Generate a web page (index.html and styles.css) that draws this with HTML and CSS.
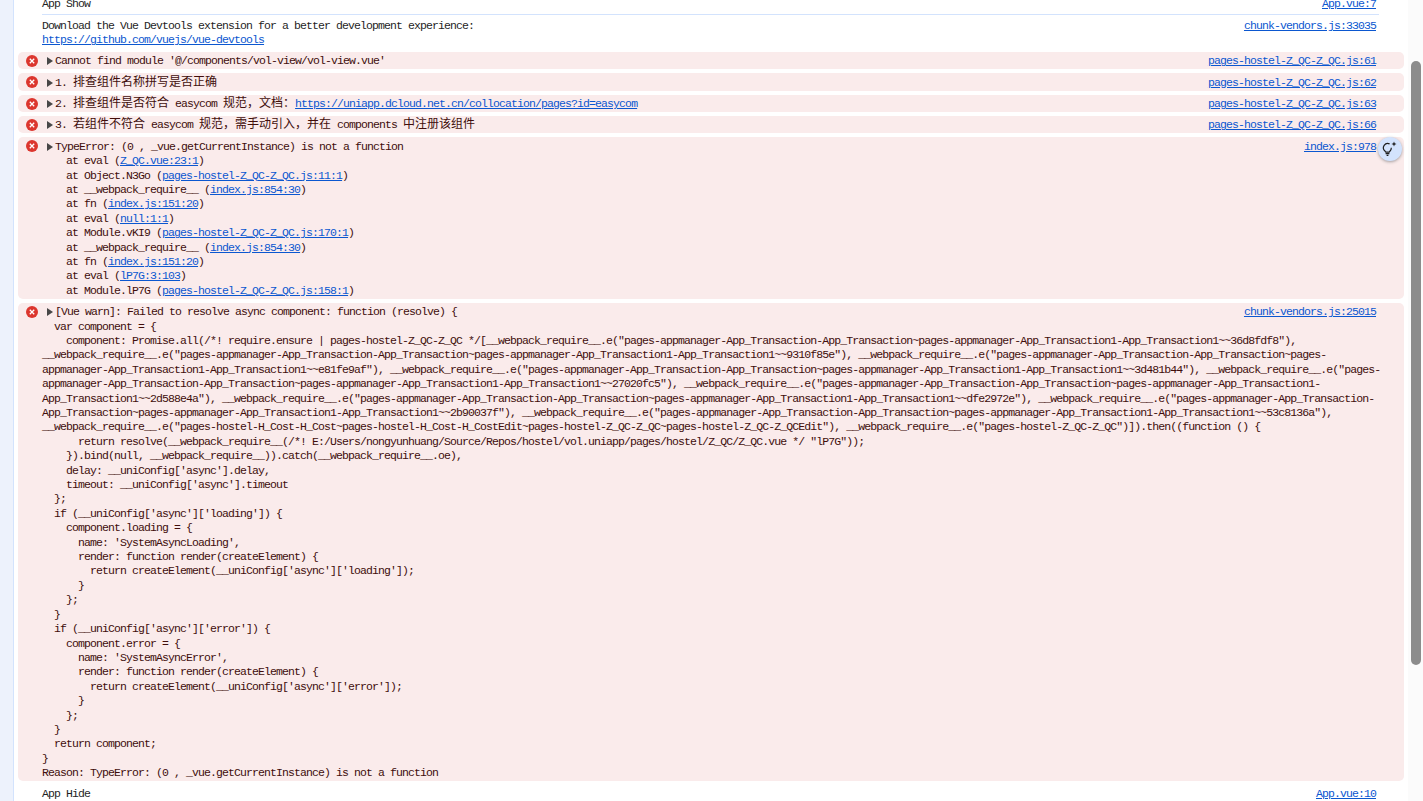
FILE: index.html
```html
<!DOCTYPE html>
<html lang="en">
<head>
<meta charset="utf-8">
<title>Console</title>
<link rel="stylesheet" href="styles.css">
</head>
<body>
<div class="rail"></div>
<main class="console">
  <div class="row row-first"><div class="ruled"><a class="src" href="#">App.vue:7</a><div class="line">App Show</div></div></div>
  <div class="row row-info"><div class="msg"><a class="src" href="#">chunk-vendors.js:33035</a><div class="line">Download the Vue Devtools extension for a better development experience:</div><div class="line"><a href="#">https://github.com/vuejs/vue-devtools</a></div></div></div>

  <div class="row err"><svg class="icon" viewBox="0 0 12 12"><circle cx="6" cy="6" r="6"/><path d="M3.8 3.8l4.4 4.4M8.2 3.8l-4.4 4.4"/></svg><div class="msg"><a class="src" href="#">pages-hostel-Z_QC-Z_QC.js:61</a><div class="line"><span class="arrow"></span>Cannot find module '@/components/vol-view/vol-view.vue'</div></div></div>
  <div class="row err"><svg class="icon" viewBox="0 0 12 12"><circle cx="6" cy="6" r="6"/><path d="M3.8 3.8l4.4 4.4M8.2 3.8l-4.4 4.4"/></svg><div class="msg"><a class="src" href="#">pages-hostel-Z_QC-Z_QC.js:62</a><div class="line"><span class="arrow"></span>1. <span class="cjk">排查组件名称拼写是否正确</span></div></div></div>
  <div class="row err"><svg class="icon" viewBox="0 0 12 12"><circle cx="6" cy="6" r="6"/><path d="M3.8 3.8l4.4 4.4M8.2 3.8l-4.4 4.4"/></svg><div class="msg"><a class="src" href="#">pages-hostel-Z_QC-Z_QC.js:63</a><div class="line"><span class="arrow"></span>2. <span class="cjk">排查组件是否符合</span> easycom <span class="cjk">规范，文档：</span><a href="#">https://uniapp.dcloud.net.cn/collocation/pages?id=easycom</a></div></div></div>
  <div class="row err"><svg class="icon" viewBox="0 0 12 12"><circle cx="6" cy="6" r="6"/><path d="M3.8 3.8l4.4 4.4M8.2 3.8l-4.4 4.4"/></svg><div class="msg"><a class="src" href="#">pages-hostel-Z_QC-Z_QC.js:66</a><div class="line"><span class="arrow"></span>3. <span class="cjk">若组件不符合</span> easycom <span class="cjk">规范，需手动引入，并在</span> components <span class="cjk">中注册该组件</span></div></div></div>

  <div class="row err"><svg class="icon" viewBox="0 0 12 12"><circle cx="6" cy="6" r="6"/><path d="M3.8 3.8l4.4 4.4M8.2 3.8l-4.4 4.4"/></svg><div class="msg"><a class="src" href="#">index.js:978</a><div class="line"><span class="arrow"></span>TypeError: (0 , _vue.getCurrentInstance) is not a function</div>
<div class="line">    at eval (<a href="#">Z_QC.vue:23:1</a>)</div>
<div class="line">    at Object.N3Go (<a href="#">pages-hostel-Z_QC-Z_QC.js:11:1</a>)</div>
<div class="line">    at __webpack_require__ (<a href="#">index.js:854:30</a>)</div>
<div class="line">    at fn (<a href="#">index.js:151:20</a>)</div>
<div class="line">    at eval (<a href="#">null:1:1</a>)</div>
<div class="line">    at Module.vKI9 (<a href="#">pages-hostel-Z_QC-Z_QC.js:170:1</a>)</div>
<div class="line">    at __webpack_require__ (<a href="#">index.js:854:30</a>)</div>
<div class="line">    at fn (<a href="#">index.js:151:20</a>)</div>
<div class="line">    at eval (<a href="#">lP7G:3:103</a>)</div>
<div class="line">    at Module.lP7G (<a href="#">pages-hostel-Z_QC-Z_QC.js:158:1</a>)</div></div></div>

  <div class="row err"><svg class="icon" viewBox="0 0 12 12"><circle cx="6" cy="6" r="6"/><path d="M3.8 3.8l4.4 4.4M8.2 3.8l-4.4 4.4"/></svg><div class="msg"><a class="src" href="#">chunk-vendors.js:25015</a><div class="line"><span class="arrow"></span>[Vue warn]: Failed to resolve async component: function (resolve) {</div>
<div class="line">  var component = {</div>
<div class="line">    component: Promise.all(/*! require.ensure | pages-hostel-Z_QC-Z_QC */[__webpack_require__.e("pages-appmanager-App_Transaction-App_Transaction~pages-appmanager-App_Transaction1-App_Transaction1~~36d8fdf8"),</div>
<div class="line">__webpack_require__.e("pages-appmanager-App_Transaction-App_Transaction~pages-appmanager-App_Transaction1-App_Transaction1~~9310f85e"), __webpack_require__.e("pages-appmanager-App_Transaction-App_Transaction~pages-</div>
<div class="line">appmanager-App_Transaction1-App_Transaction1~~e81fe9af"), __webpack_require__.e("pages-appmanager-App_Transaction-App_Transaction~pages-appmanager-App_Transaction1-App_Transaction1~~3d481b44"), __webpack_require__.e("pages-</div>
<div class="line">appmanager-App_Transaction-App_Transaction~pages-appmanager-App_Transaction1-App_Transaction1~~27020fc5"), __webpack_require__.e("pages-appmanager-App_Transaction-App_Transaction~pages-appmanager-App_Transaction1-</div>
<div class="line">App_Transaction1~~2d588e4a"), __webpack_require__.e("pages-appmanager-App_Transaction-App_Transaction~pages-appmanager-App_Transaction1-App_Transaction1~~dfe2972e"), __webpack_require__.e("pages-appmanager-App_Transaction-</div>
<div class="line">App_Transaction~pages-appmanager-App_Transaction1-App_Transaction1~~2b90037f"), __webpack_require__.e("pages-appmanager-App_Transaction-App_Transaction~pages-appmanager-App_Transaction1-App_Transaction1~~53c8136a"),</div>
<div class="line">__webpack_require__.e("pages-hostel-H_Cost-H_Cost~pages-hostel-H_Cost-H_CostEdit~pages-hostel-Z_QC-Z_QC~pages-hostel-Z_QC-Z_QCEdit"), __webpack_require__.e("pages-hostel-Z_QC-Z_QC")]).then((function () {</div>
<div class="line">      return resolve(__webpack_require__(/*! E:/Users/nongyunhuang/Source/Repos/hostel/vol.uniapp/pages/hostel/Z_QC/Z_QC.vue */ "lP7G"));</div>
<div class="line">    }).bind(null, __webpack_require__)).catch(__webpack_require__.oe),</div>
<div class="line">    delay: __uniConfig['async'].delay,</div>
<div class="line">    timeout: __uniConfig['async'].timeout</div>
<div class="line">  };</div>
<div class="line">  if (__uniConfig['async']['loading']) {</div>
<div class="line">    component.loading = {</div>
<div class="line">      name: 'SystemAsyncLoading',</div>
<div class="line">      render: function render(createElement) {</div>
<div class="line">        return createElement(__uniConfig['async']['loading']);</div>
<div class="line">      }</div>
<div class="line">    };</div>
<div class="line">  }</div>
<div class="line">  if (__uniConfig['async']['error']) {</div>
<div class="line">    component.error = {</div>
<div class="line">      name: 'SystemAsyncError',</div>
<div class="line">      render: function render(createElement) {</div>
<div class="line">        return createElement(__uniConfig['async']['error']);</div>
<div class="line">      }</div>
<div class="line">    };</div>
<div class="line">  }</div>
<div class="line">  return component;</div>
<div class="line">}</div>
<div class="line">Reason: TypeError: (0 , _vue.getCurrentInstance) is not a function</div></div></div>

  <div class="row row-info"><div class="msg"><a class="src" href="#">App.vue:10</a><div class="line">App Hide</div></div></div>

  <button class="insight" type="button" aria-label="Understand this error">
    <svg viewBox="0 0 24 24" width="24" height="24"><path class="bulb" d="M11.6 6.9A4.3 4.3 0 0 0 6.9 14l.9 1.2h3.4l.9-1.2a4.3 4.3 0 0 0 1.2-3.2"/><path class="bulb" d="M7.6 16.6h3.8M8.6 18.4h1.8"/><path class="spark" d="M16 4.5l.7 1.8 1.8.7-1.8.7-.7 1.8-.7-1.8-1.8-.7 1.8-.7z"/></svg>
  </button>
</main>
<div class="scrollbar"><div class="thumb"></div></div>
</body>
</html>
```
FILE: styles.css
```css
html, body {
  margin: 0;
  height: 801px;
  overflow: hidden;
  background: #fff;
}
body {
  display: flex;
  font-family: "Liberation Mono", monospace;
  font-size: 11.5px;
  letter-spacing: -0.9px;
  line-height: 14.4px;
  color: #1f1f1f;
}
.rail {
  flex: 0 0 13px;
  background: #edf2fc;
  border-right: 1px solid #d3e3fd;
}
.console {
  position: relative;
  flex: 1;
  min-width: 0;
  display: flex;
  flex-direction: column;
  gap: 4px;
  margin-top: -3px;
  padding: 0 4px;
}
.row {
  display: flex;
  flex: none;
  padding: 0 25px 0 24px;
}
.row-first {
  margin-bottom: -1px;
}
.ruled {
  flex: 1;
  padding-bottom: 3px;
  border-bottom: 1px solid #d3e3fd;
}
.row-info {
  padding-top: 0.6px;
}
.row-info + .err {
  margin-top: 0.2px;
}
.err + .row-info {
  padding-top: 1.6px;
}
.err {
  padding: 2.47px 25px 0.46px 8px;
  border-radius: 5px;
  background: #faebeb;
  color: #410e0b;
}
.icon {
  flex: 0 0 12px;
  width: 12px;
  height: 12px;
  margin: 0.5px 4px 0 0;
}
.icon circle {
  fill: #dc362e;
}
.icon path {
  fill: none;
  stroke: #fff;
  stroke-width: 1.3;
}
.msg {
  flex: 1;
  min-width: 0;
}
.line {
  white-space: pre;
}
.src {
  float: right;
  margin-right: 3px;
}
a {
  color: #0b57d0;
  text-decoration: underline;
}
.arrow {
  display: inline-block;
  width: 0;
  height: 0;
  margin: 0 2px 0 5px;
  border-left: 6px solid #474747;
  border-top: 4px solid transparent;
  border-bottom: 4px solid transparent;
  vertical-align: -1px;
}
.cjk {
  font-family: "Noto Sans CJK SC", sans-serif;
  font-size: 12px;
  line-height: 0;
  letter-spacing: 0;
}
.insight {
  position: absolute;
  top: 140px;
  left: 1364px;
  width: 24px;
  height: 24px;
  padding: 0;
  border: 0;
  border-radius: 50%;
  background: #d3e3fd;
  box-shadow: 0 1px 3px rgba(60, 64, 67, .45);
}
.insight svg {
  display: block;
}
.bulb {
  fill: none;
  stroke: #1f1f1f;
  stroke-width: 1.2;
}
.spark {
  fill: #1f1f1f;
}
.scrollbar {
  flex: 0 0 15px;
  box-sizing: border-box;
  padding: 61px 2px 0 3px;
  background: #fbfbfb;
}
.thumb {
  width: 10px;
  height: 604px;
  border-radius: 5px;
  background: #8c8c8c;
}
```
